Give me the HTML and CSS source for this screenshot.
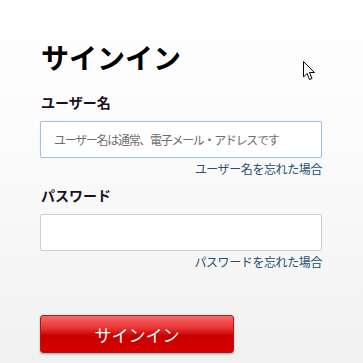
FILE: index.html
```html
<!DOCTYPE html>
<html lang="ja">
<head>
<meta charset="utf-8">
<link rel="stylesheet" href="styles.css">
</head>
<body>
<div class="page">
  <h1 class="title">サインイン</h1>
  <div class="field field-user">
    <label class="label">ユーザー名</label>
    <div class="input input-focus"><span class="placeholder">ユーザー名は通常、電子メール・アドレスです</span></div>
    <a class="forgot">ユーザー名を忘れた場合</a>
  </div>
  <div class="field">
    <label class="label">パスワード</label>
    <div class="input"></div>
    <a class="forgot">パスワードを忘れた場合</a>
  </div>
  <button class="btn">サインイン</button>
  <svg class="cursor" width="13" height="20" viewBox="0 0 13 20"><path d="M0.5 0.5 L0.5 16 L4 12.5 L6.5 18.5 L9 17.5 L6.5 11.5 L11.5 11.5 Z" fill="#fff" stroke="#000" stroke-width="1" stroke-linejoin="miter"/></svg>
</div>
</body>
</html>
```
FILE: styles.css
```css
html, body {
  margin: 0;
  padding: 0;
}
body {
  width: 363px;
  height: 363px;
  overflow: hidden;
  background: linear-gradient(#ffffff 0%, #fbfbfb 40%, #f1f1f1 100%);
  font-family: "Liberation Sans", "Noto Sans CJK JP", sans-serif;
}
.page {
  position: relative;
  padding: 40px 41px 0 40px;
  height: 100%;
  box-sizing: border-box;
}
.title {
  margin: 0 0 0 1px;
  font-size: 28px;
  line-height: 40px;
  font-weight: bold;
  color: #000;
}
.field {
  display: flex;
  flex-direction: column;
}
.field-user {
  margin-top: 13px;
}
.label {
  margin-left: 1px;
  font-size: 14px;
  line-height: 20px;
  font-weight: bold;
  color: #1b0f24;
}
.input {
  margin-top: 8px;
  height: 35px;
  border: 1px solid #cfcfcf;
  border-radius: 2px;
  background: #fff;
  display: flex;
  align-items: center;
  padding-left: 13px;
}
.input-focus {
  border-color: #a6bfe3;
  box-shadow: 0 0 1px #c8d8f0;
}
.placeholder {
  font-size: 12px;
  letter-spacing: -1.3px;
  white-space: nowrap;
  color: #6e6e6e;
}
.forgot {
  align-self: flex-end;
  margin-top: 3px;
  margin-bottom: 7px;
  font-size: 12px;
  letter-spacing: -0.4px;
  line-height: 18px;
  color: #25506e;
}
.btn {
  display: block;
  margin-top: 36px;
  width: 194px;
  height: 38px;
  border: 1px solid #b01818;
  border-radius: 3px;
  background: linear-gradient(#f56a6a 0%, #e83030 35%, #c80000 55%, #d80000 100%);
  color: #fff;
  font-family: "Liberation Sans", "Noto Sans CJK JP", sans-serif;
  font-size: 17px;
  box-shadow: 0 1px 2px rgba(0,0,0,0.35);
  padding: 0;
}
.cursor {
  position: absolute;
  left: 303px;
  top: 61px;
}
```
